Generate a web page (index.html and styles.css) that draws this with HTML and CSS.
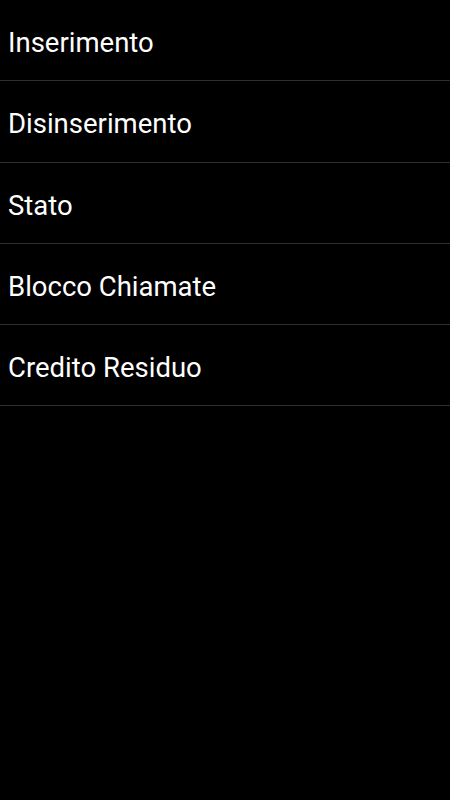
FILE: index.html
```html
<!DOCTYPE html>
<html lang="it">
<head>
    <meta charset="UTF-8">
    <meta name="viewport" content="width=device-width, initial-scale=1.0">
    <title>Menu</title>
    <link rel="stylesheet" href="styles.css">
</head>
<body>
    <ul class="menu-list">
        <li class="menu-item">Inserimento</li>
        <li class="menu-item">Disinserimento</li>
        <li class="menu-item">Stato</li>
        <li class="menu-item">Blocco Chiamate</li>
        <li class="menu-item">Credito Residuo</li>
    </ul>
</body>
</html>
```

FILE: styles.css
```css
body {
    margin: 0;
    background: #000;
    color: #fff;
    font-family: Roboto, 'Noto Sans', Arial, sans-serif;
    min-height: 100vh;
}
.menu-list {
    list-style: none;
    margin: 0;
    padding: 0;
}
.menu-item {
    height: 81.25px;
    box-sizing: border-box;
    padding: 5px 8px 0;
    display: flex;
    align-items: center;
    font-size: 27.5px;
    border-bottom: 1px solid #2e2e2e;
}
```
